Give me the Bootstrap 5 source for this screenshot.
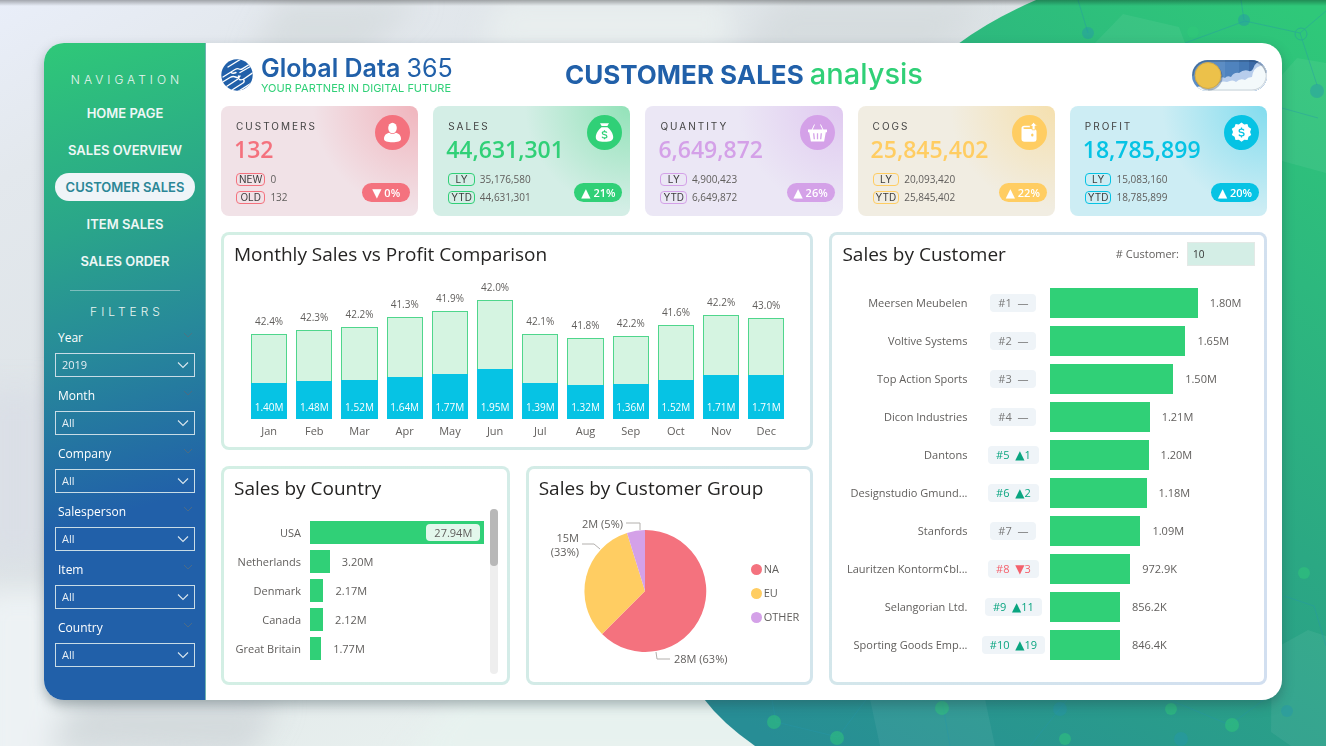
<!DOCTYPE html>
<html lang="en">
<head>
<meta charset="utf-8">
<meta name="viewport" content="width=device-width, initial-scale=1">
<title>Customer Sales Analysis</title>
<link href="https://cdn.jsdelivr.net/npm/bootstrap@5.3.0/dist/css/bootstrap.min.css" rel="stylesheet">
<style>
:root{--green:#30d077;--blue:#2160a9;--cyan:#06c3e4;--ink:#605e5c}
body{font-family:"Open Sans","Noto Sans",sans-serif;font-size:11px;line-height:16px;color:var(--ink);background:#e4e8ec;min-height:100vh}
.geo{font-family:Inter,"Open Sans",sans-serif}
.backdrop{position:fixed;inset:0;width:100%;height:100%;z-index:-1}
.stage{min-height:100vh;padding:43px 44px 46px}
.board{border-radius:20px;background:#fff;box-shadow:0 5px 12px rgba(40,60,70,.35);overflow:hidden}
.side{width:162px;flex:none;padding:27px 10px 16px 11px;background:linear-gradient(163deg,#2fc878 0%,#2aa58a 28%,#27899a 46%,#2160a9 70%);border-right:1px solid #6fb3b0}
.side-title{font-size:12px;line-height:20px;font-weight:300;letter-spacing:4px;color:#e9f5f1;text-align:center;margin:0;padding-left:4px}
.side .nav{gap:9px;margin-top:9px}
.side .nav-link{font-size:13px;line-height:28px;padding:0;text-align:center;font-weight:600;color:#eef7f6;border-radius:14px;white-space:nowrap}
.side .nav-link.active{background:#eff4f8;color:#2b8696}
.side hr{margin:15px 15px 11px;color:#cfe3e8;opacity:.5}
.slicers{gap:10px;margin-top:7px;font-family:"Open Sans",sans-serif}
.slicer-head{padding:0 3px;margin-bottom:6px}
.slicers label{font-size:12px;line-height:18px;color:#fff}
.slicers .form-select{height:24px;padding:0 24px 0 6px;font-size:11px;line-height:16px;color:#e6eef4;border:1px solid #c8dce6;border-radius:0;background-color:transparent;background-image:url("data:image/svg+xml,%3Csvg xmlns='http://www.w3.org/2000/svg' viewBox='0 0 12 8'%3E%3Cpath d='M1 1.5l5 5 5-5' fill='none' stroke='%23dbe7ee' stroke-width='1.1'/%3E%3C/svg%3E");background-size:12px 8px;background-position:right 5px center}
.slicers option{color:#333}
.content{padding:12px 15px 15px;min-width:0}
.top-row{display:grid;grid-template-columns:1fr auto 1fr;min-height:40px}
.brand-name{font-size:25px;line-height:26px;font-weight:600;color:var(--blue)}
.brand-name span{font-weight:400}
.brand-tag{font-size:11px;line-height:14px;color:var(--green)}
.page-title{font-size:26px;line-height:36px;font-weight:700;color:var(--blue)}
.page-title span{font-size:29px;line-height:1;font-weight:500;color:var(--green)}
.kpis{gap:15px;margin-top:11px}
.kpi{flex:1 1 0;min-width:0;border-radius:8px;padding:9px 8px 12px 15px;min-height:110px;background:radial-gradient(circle at 100% 0,var(--glow),var(--tint) 105px)}
.k-red{--c:#f4727e;--tint:#f1e2e7;--glow:#f0b5bd}
.k-green{--c:#30d077;--tint:#d4eee6;--glow:#92e2b8}
.k-purple{--c:#d4a1e8;--tint:#ebe7f5;--glow:#e0c9f0}
.k-gold{--c:#ffcd62;--tint:#f1ede2;--glow:#f5e0ae}
.k-cyan{--c:#06c3e4;--tint:#cdedf4;--glow:#82dcee}
.kpi h2{font-size:10px;line-height:14px;letter-spacing:2px;font-weight:400;color:#444;margin:4px 0}
.kpi-value{font-size:23px;line-height:24px;font-weight:600;color:var(--c);margin-left:-2px}
.kpi dl{display:grid;grid-template-columns:auto 1fr;gap:5px;margin:12px 0 0;align-items:center}
.kpi dt{font-weight:400;font-size:10px;line-height:11px;text-align:center;border:1px solid var(--c);border-radius:4px;color:#3c3c3c;padding:0 2px}
.kpi dd{margin:0;line-height:13px;font-size:10px}
.kpi-pill{background:var(--c);color:#fff;font-size:11px;font-weight:600;line-height:19px;border-radius:10px;width:48px;text-align:center;margin-bottom:2px;white-space:nowrap}
.tri{font-family:"DejaVu Sans",sans-serif;font-size:12px;font-weight:400;line-height:1}
.panels{display:grid;grid-template-columns:289fr 288fr 438fr;grid-template-rows:218fr 219fr;gap:16px;margin-top:16px}
.panel{border:3px solid transparent;border-radius:8px;background:linear-gradient(#fff,#fff) padding-box,linear-gradient(100deg,var(--a),var(--b)) border-box;padding:7px 9px 7px 10px;min-width:0}
.panel h2{font-size:19px;line-height:24px;font-weight:400;color:#252423;margin:0}
.months{height:158px;margin:15px 17px 0;gap:9px}
.month{flex:1 1 0;min-width:0;text-align:center}
.pct{font-size:10px;line-height:18px;margin:0 -6px 4px}
.col-sales{width:100%;background:#d5f4e1;border:1px solid #4fd68c}
.col-profit{background:var(--cyan);color:#fff;font-size:10px;line-height:12px;margin:0 -1px -1px;padding-bottom:6px}
.month-name{line-height:16px;margin-top:4px}
.h-row{gap:9px}
.fill{background:var(--green);flex:none}
.nation .h-row{height:23px;margin-bottom:6px}
.nation .who{width:67px;text-align:right;white-space:nowrap}
.nation .fill{height:23px}
.nation-body{margin-top:9px}
.chip{background:#e3f7ec;border-radius:4px;line-height:17px;padding:0 8px}
.rail{width:8px;border-radius:4px;background:#eee}
.rail div{width:8px;height:57px;border-radius:4px;background:#b8b8b8}
.group-body{margin-top:2px}
.key{padding-top:12px;gap:8px}
.key li{gap:2px}
.dot{width:11px;height:11px;border-radius:50%}
.cust-head{margin-bottom:22px}
.cust .h-row{height:30px;margin-bottom:8px}
.cust .who{width:125px;text-align:right;white-space:nowrap}
.cust .fill{height:30px}
.rank-cell{width:74px;flex:none}
.rank{background:#eff4f8;border-radius:4px;line-height:18px;padding:0 8px;color:#777;white-space:pre}
.rank.up{color:#0aa580}.rank.down{color:#f4616c}
.count-box{width:68px;height:24px;border:1px solid #e3e9e6;border-radius:0;background:#d4eee6;font-size:10px;color:#333;padding:0 5px}
</style>
</head>
<body>
<svg class="backdrop" viewBox="0 0 1326 746" preserveAspectRatio="none" aria-hidden="true">
<defs>
<linearGradient id="base" x1="0" y1="0" x2="1" y2="1"><stop offset="0" stop-color="#e9eef9"/><stop offset=".12" stop-color="#e3e8ed"/><stop offset=".4" stop-color="#dce2e5"/><stop offset=".7" stop-color="#eaf2f0"/></linearGradient>
<linearGradient id="sweep" gradientUnits="userSpaceOnUse" x1="1290" y1="0" x2="780" y2="746"><stop offset="0" stop-color="#2fc879"/><stop offset=".5" stop-color="#2ba883"/><stop offset="1" stop-color="#278d95"/></linearGradient>
<linearGradient id="shade" x1="0" y1="0" x2="0" y2="1"><stop offset="0" stop-color="#000" stop-opacity=".3"/><stop offset="1" stop-color="#000" stop-opacity="0"/></linearGradient>
<filter id="soft" x="-20%" y="-20%" width="140%" height="140%"><feGaussianBlur stdDeviation="14"/></filter>
</defs>
<rect width="1326" height="746" fill="url(#base)"/>
<g filter="url(#soft)"><path d="M280 0h140l-60 60H250zM780 0h200l-40 60H740z" fill="#d3d9dc" opacity=".7"/><path d="M500 0h230v50H480z" fill="#e8eeee"/>
<path d="M-20 390H50V560H-20z" fill="#dadfe6"/><path d="M-20 590H60V780H-20z" fill="#edf2f4"/><path d="M40 746L90 700h190l-30 56z" fill="#cfd6d9" opacity=".8"/><path d="M400 770l60-80h300l40 80z" fill="#e7f2ef"/></g>
<path d="M1036 0Q990 20 958 44C700 250 590 520 704 699Q722 723 755 746H1326V0z" fill="url(#sweep)"/>
<g fill="#fff" opacity=".06"><path d="M1095 43l28-29 56 13 6 16zM1282 75l15-17 29 5v110l-44-12zM870 699h115l10 47H880zM1272 650l36-20 18 6v110h-35l-20-14z"/></g>
<g fill="none" stroke="#2697ab" stroke-opacity=".4"><path d="M1078 0l10 33M1185 43l60-22 55 12 17 52M1241 0l3 20M1300 33l26-22M1282 108l36 10M772 700l4 22 62 15 30-40M942 700l8 46M1170 700l60 25 40-30M1030 746l40-50M1284 596l30 10 12 40"/></g>
<circle cx="1301" cy="34" r="6" fill="none" stroke="#2bb08f"/>
<g fill="#2697ab" fill-opacity=".45"><circle cx="1088" cy="33" r="6"/><circle cx="1244" cy="20" r="6"/><circle cx="1317" cy="91" r="7"/><circle cx="1060" cy="709" r="7"/><circle cx="1287" cy="711" r="6"/><circle cx="1181" cy="739" r="7"/></g>
<g fill="#30c97a" fill-opacity=".5"><circle cx="774" cy="722" r="7"/><circle cx="837" cy="738" r="7"/><circle cx="942" cy="708" r="7"/><circle cx="1171" cy="709" r="6"/><circle cx="1232" cy="725" r="7"/><circle cx="1065" cy="739" r="6"/><circle cx="1304" cy="573" r="6"/><circle cx="1193" cy="32" r="6"/></g>
<rect width="1326" height="6" fill="url(#shade)"/>
</svg>

<div class="stage d-flex">
<div class="board d-flex flex-grow-1">
<aside class="side geo">
  <p class="side-title">NAVIGATION</p>
  <nav class="nav flex-column" aria-label="Reports">
    <a class="nav-link" href="#">HOME PAGE</a>
    <a class="nav-link" href="#">SALES OVERVIEW</a>
    <a class="nav-link active" href="#" aria-current="page">CUSTOMER SALES</a>
    <a class="nav-link" href="#">ITEM SALES</a>
    <a class="nav-link" href="#">SALES ORDER</a>
  </nav>
  <hr>
  <p class="side-title">FILTERS</p>
  <form class="slicers d-flex flex-column">
    <div><div class="slicer-head d-flex justify-content-between"><label for="f1">Year</label><svg width="8" height="14" viewBox="0 0 8 14" fill="none" stroke="#4b7583" aria-hidden="true"><path d="M0 4l4 4 4-4"/></svg></div><select class="form-select" id="f1"><option>2019</option></select></div>
    <div><div class="slicer-head d-flex justify-content-between"><label for="f2">Month</label><svg width="8" height="14" viewBox="0 0 8 14" fill="none" stroke="#4b6b83" aria-hidden="true"><path d="M0 4l4 4 4-4"/></svg></div><select class="form-select" id="f2"><option>All</option></select></div>
    <div><div class="slicer-head d-flex justify-content-between"><label for="f3">Company</label><svg width="8" height="14" viewBox="0 0 8 14" fill="none" stroke="#4b6b83" aria-hidden="true"><path d="M0 4l4 4 4-4"/></svg></div><select class="form-select" id="f3"><option>All</option></select></div>
    <div><div class="slicer-head d-flex justify-content-between"><label for="f4">Salesperson</label><svg width="8" height="14" viewBox="0 0 8 14" fill="none" stroke="#4b6b88" aria-hidden="true"><path d="M0 4l4 4 4-4"/></svg></div><select class="form-select" id="f4"><option>All</option></select></div>
    <div><div class="slicer-head d-flex justify-content-between"><label for="f5">Item</label><svg width="8" height="14" viewBox="0 0 8 14" fill="none" stroke="#4b6b88" aria-hidden="true"><path d="M0 4l4 4 4-4"/></svg></div><select class="form-select" id="f5"><option>All</option></select></div>
    <div><div class="slicer-head d-flex justify-content-between"><label for="f6">Country</label><svg width="8" height="14" viewBox="0 0 8 14" fill="none" stroke="#4b6b88" aria-hidden="true"><path d="M0 4l4 4 4-4"/></svg></div><select class="form-select" id="f6"><option>All</option></select></div>
  </form>
</aside>

<main class="content flex-grow-1 d-flex flex-column">
  <header class="top-row align-items-center">
    <div class="d-flex align-items-center gap-2 geo">
      <svg width="32" height="32" viewBox="0 0 32 32" aria-hidden="true"><defs><clipPath id="globe"><circle cx="16" cy="16" r="15.7"/></clipPath></defs><circle cx="16" cy="16" r="15.7" fill="#2160a9"/><g clip-path="url(#globe)" fill="none" stroke="#fff" stroke-width="1.4" stroke-linecap="round" stroke-linejoin="round"><path d="M7 8L20 0M2 18L14 10.500q2.500-1.500 4-.5t4-.7L29 5M0 24l9-5.500q3-1.700 5.500-.5t4.500-1M10 13.500q2 1.500 5 0M4 28.500L17 20q2-1.500.5-3M19 13.500L32 6M18.500 20.500q2 1 5-1L33 13M11 31l11-7q2-1.500.5-3.500M17 32.500L33 22.500"/></g></svg>
      <div><div class="brand-name">Global Data <span>365</span></div><div class="brand-tag">YOUR PARTNER IN DIGITAL FUTURE</div></div>
    </div>
    <h1 class="page-title geo m-0">CUSTOMER SALES <span>analysis</span></h1>
    <label class="ms-auto d-block lh-1">
      <input class="visually-hidden" type="checkbox" role="switch" aria-label="Light theme" checked>
      <svg width="75" height="31" viewBox="0 0 75 31" aria-hidden="true"><defs><clipPath id="tg"><rect width="75" height="31" rx="15.500"/></clipPath></defs><g clip-path="url(#tg)"><rect width="75" height="31" fill="#5c8dc4"/><path d="M33 0h14v31H33z" fill="#4f83be"/><path d="M47 0h12v31H47z" fill="#4478b4"/><path d="M57 0h18v31H57z" fill="#3a69a6"/><path d="M26 31V20q3-4 7-2 2-3 6-1 3-5 8-4 5-4 10-2 2 1 4-2 1-8 14-9v31z" fill="#b7cdec"/><path d="M5 31v-4q10-3 20-2 4-5 10-3 6-3 9 0 4-4 9-2 3-3 7-3 1-9 8-11 5-2 7 2v23z" fill="#f3f9fb"/><path d="M1 15.500A14.500 14.500 0 0 1 15.500 1h44A14.500 14.500 0 0 1 74 13" fill="none" stroke="#27415f" stroke-opacity=".4" stroke-width="1.500"/><path d="M74 13A14.500 14.500 0 0 1 60 30H16" fill="none" stroke="#c9d2d8" stroke-width="1"/><circle cx="17" cy="17" r="13.500" fill="#26405e" opacity=".35"/></g><circle cx="16" cy="15.500" r="13" fill="#ecc14a" stroke="#d2ab48"/></svg>
    </label>
  </header>

  <section class="kpis d-flex" aria-label="Key figures">
    <article class="kpi k-red d-flex justify-content-between">
      <div><h2 class="geo">CUSTOMERS</h2><div class="kpi-value">132</div><dl><dt class="geo">NEW</dt><dd>0</dd><dt class="geo">OLD</dt><dd>132</dd></dl></div>
      <div class="d-flex flex-column justify-content-between align-items-end">
        <svg width="35" height="35" viewBox="0 0 35 35" aria-hidden="true"><circle cx="17.500" cy="17.500" r="17.500" fill="#f4727e"/><g fill="#fff"><ellipse cx="17.500" cy="13" rx="4.300" ry="5.200"/><path d="M9 24c0-4 2.500-5.500 5.300-6.200q3.200 2.600 6.400 0C23.500 18.500 26 20 26 24c0 2.500-3.500 3.200-8.500 3.200S9 26.500 9 24z"/></g></svg>
        <span class="kpi-pill"><span class="tri">▼</span> 0%</span></div>
    </article>
    <article class="kpi k-green d-flex justify-content-between">
      <div><h2 class="geo">SALES</h2><div class="kpi-value">44,631,301</div><dl><dt class="geo">LY</dt><dd>35,176,580</dd><dt class="geo">YTD</dt><dd>44,631,301</dd></dl></div>
      <div class="d-flex flex-column justify-content-between align-items-end">
        <svg width="35" height="35" viewBox="0 0 35 35" aria-hidden="true"><circle cx="17.500" cy="17.500" r="17.500" fill="#30d077"/><path fill="#fff" d="M13 8.300h9l-1.600 2.700h-5.800zM14.500 12.200h6c3 2.400 5.700 6.300 5.700 9.800 0 3.600-2.500 4.700-8.700 4.700S8.800 25.600 8.800 22c0-3.500 2.700-7.400 5.700-9.800z"/><path d="M19.900 17.600q-.8-1-2.400-1-2.200 0-2.200 1.500 0 1.300 2.200 1.600 2.400.3 2.400 1.700 0 1.500-2.400 1.500-1.800 0-2.500-1.200M17.500 15.300v1.300m0 6.300v1.400" fill="none" stroke="#30d077" stroke-width="1.200"/></svg>
        <span class="kpi-pill"><span class="tri">▲</span> 21%</span></div>
    </article>
    <article class="kpi k-purple d-flex justify-content-between">
      <div><h2 class="geo">QUANTITY</h2><div class="kpi-value">6,649,872</div><dl><dt class="geo">LY</dt><dd>4,900,423</dd><dt class="geo">YTD</dt><dd>6,649,872</dd></dl></div>
      <div class="d-flex flex-column justify-content-between align-items-end">
        <svg width="35" height="35" viewBox="0 0 35 35" aria-hidden="true"><circle cx="17.500" cy="17.500" r="17.500" fill="#d4a1e8"/><path d="M12 15l2.500-5.500M23 15l-2.500-5.500" stroke="#fff" stroke-width="1"/><path fill="#fff" d="M8 14.500h19v2.700h-1.200l-1.700 9.300H10.900L9.200 17.200H8z"/><path d="M13.700 18.300l.6 6M17.500 18.300v6M21.300 18.300l-.6 6" stroke="#d4a1e8" stroke-width="1.300"/></svg>
        <span class="kpi-pill"><span class="tri">▲</span> 26%</span></div>
    </article>
    <article class="kpi k-gold d-flex justify-content-between">
      <div><h2 class="geo">COGS</h2><div class="kpi-value">25,845,402</div><dl><dt class="geo">LY</dt><dd>20,093,420</dd><dt class="geo">YTD</dt><dd>25,845,402</dd></dl></div>
      <div class="d-flex flex-column justify-content-between align-items-end">
        <svg width="35" height="35" viewBox="0 0 35 35" aria-hidden="true"><circle cx="17.500" cy="17.500" r="17.500" fill="#ffcd62"/><path fill="#fff" d="M12.300 10.800H18v1.500h-5.500q-1.300 0-1.300.8t1.300.8H22q2.500 0 2.500 2.200v8.300q0 2.300-2.500 2.300h-9.500q-3 0-3-2.700V13.500q0-2.700 2.800-2.700z"/><path fill="#fff" stroke="#ffcd62" stroke-width=".8" d="M21.600 7.400l3.800 3.600h-2.300v3.800h-3V11h-2.300z"/><ellipse cx="20.300" cy="20" rx="1.200" ry="1.500" fill="#ffcd62"/></svg>
        <span class="kpi-pill"><span class="tri">▲</span> 22%</span></div>
    </article>
    <article class="kpi k-cyan d-flex justify-content-between">
      <div><h2 class="geo">PROFIT</h2><div class="kpi-value">18,785,899</div><dl><dt class="geo">LY</dt><dd>15,083,160</dd><dt class="geo">YTD</dt><dd>18,785,899</dd></dl></div>
      <div class="d-flex flex-column justify-content-between align-items-end">
        <svg width="35" height="35" viewBox="0 0 35 35" aria-hidden="true"><circle cx="17.500" cy="17.500" r="17.500" fill="#06c3e4"/><path fill="#fff" d="M17.500 7.500l2.700 1.900 3.200-.4 1 3.100 2.800 1.700-1.100 3.100 1.100 3.100-2.700 1.800-.9 3.200-3.300-.2-2.800 2-2.700-2-3.300.2-.9-3.200-2.800-1.800 1.200-3.100-1.200-3.100 2.800-1.700 1-3.100 3.200.4z"/><path d="M20 15.400q-.8-1.200-2.500-1.200-2.300 0-2.300 1.500t2.300 1.700q2.500.3 2.500 1.900 0 1.600-2.500 1.600-1.900 0-2.600-1.300M17.500 12.500v1.600m0 6.900v1.600" fill="none" stroke="#06c3e4" stroke-width="1.300"/></svg>
        <span class="kpi-pill"><span class="tri">▲</span> 20%</span></div>
    </article>
  </section>

  <div class="panels flex-grow-1">
    <section class="panel" style="--a:#d3efe4;--b:#d2e6ea;grid-column:span 2">
      <h2>Monthly Sales vs Profit Comparison</h2>
      <div class="months d-flex align-items-end">
        <div class="month"><div class="pct">42.4%</div><div class="col-sales d-flex flex-column justify-content-end" style="height:85px"><div class="col-profit d-flex align-items-end justify-content-center" style="height:36px">1.40M</div></div><div class="month-name">Jan</div></div>
        <div class="month"><div class="pct">42.3%</div><div class="col-sales d-flex flex-column justify-content-end" style="height:89px"><div class="col-profit d-flex align-items-end justify-content-center" style="height:38px">1.48M</div></div><div class="month-name">Feb</div></div>
        <div class="month"><div class="pct">42.2%</div><div class="col-sales d-flex flex-column justify-content-end" style="height:92px"><div class="col-profit d-flex align-items-end justify-content-center" style="height:39px">1.52M</div></div><div class="month-name">Mar</div></div>
        <div class="month"><div class="pct">41.3%</div><div class="col-sales d-flex flex-column justify-content-end" style="height:102px"><div class="col-profit d-flex align-items-end justify-content-center" style="height:42px">1.64M</div></div><div class="month-name">Apr</div></div>
        <div class="month"><div class="pct">41.9%</div><div class="col-sales d-flex flex-column justify-content-end" style="height:108px"><div class="col-profit d-flex align-items-end justify-content-center" style="height:45px">1.77M</div></div><div class="month-name">May</div></div>
        <div class="month"><div class="pct">42.0%</div><div class="col-sales d-flex flex-column justify-content-end" style="height:119px"><div class="col-profit d-flex align-items-end justify-content-center" style="height:50px">1.95M</div></div><div class="month-name">Jun</div></div>
        <div class="month"><div class="pct">42.1%</div><div class="col-sales d-flex flex-column justify-content-end" style="height:85px"><div class="col-profit d-flex align-items-end justify-content-center" style="height:36px">1.39M</div></div><div class="month-name">Jul</div></div>
        <div class="month"><div class="pct">41.8%</div><div class="col-sales d-flex flex-column justify-content-end" style="height:81px"><div class="col-profit d-flex align-items-end justify-content-center" style="height:34px">1.32M</div></div><div class="month-name">Aug</div></div>
        <div class="month"><div class="pct">42.2%</div><div class="col-sales d-flex flex-column justify-content-end" style="height:83px"><div class="col-profit d-flex align-items-end justify-content-center" style="height:35px">1.36M</div></div><div class="month-name">Sep</div></div>
        <div class="month"><div class="pct">41.6%</div><div class="col-sales d-flex flex-column justify-content-end" style="height:94px"><div class="col-profit d-flex align-items-end justify-content-center" style="height:39px">1.52M</div></div><div class="month-name">Oct</div></div>
        <div class="month"><div class="pct">42.2%</div><div class="col-sales d-flex flex-column justify-content-end" style="height:104px"><div class="col-profit d-flex align-items-end justify-content-center" style="height:44px">1.71M</div></div><div class="month-name">Nov</div></div>
        <div class="month"><div class="pct">43.0%</div><div class="col-sales d-flex flex-column justify-content-end" style="height:101px"><div class="col-profit d-flex align-items-end justify-content-center" style="height:44px">1.71M</div></div><div class="month-name">Dec</div></div>
      </div>
    </section>

    <section class="panel cust" style="--a:#d4e8ea;--b:#d2dff0;grid-row:span 2">
      <div class="cust-head d-flex align-items-center justify-content-between">
        <h2>Sales by Customer</h2>
        <div class="d-flex align-items-center gap-2"><label for="top-n"># Customer:</label><input class="count-box" id="top-n" type="text" value="10"></div>
      </div>
      <div class="h-row d-flex align-items-center"><span class="who">Meersen Meubelen</span><div class="d-flex align-items-center flex-grow-1"><div class="rank-cell d-flex justify-content-center"><span class="rank">#1  —</span></div><div class="d-flex align-items-center flex-grow-1"><div class="fill me-2" style="width:72%"></div><span class="ps-1">1.80M</span></div></div></div>
      <div class="h-row d-flex align-items-center"><span class="who">Voltive Systems</span><div class="d-flex align-items-center flex-grow-1"><div class="rank-cell d-flex justify-content-center"><span class="rank">#2  —</span></div><div class="d-flex align-items-center flex-grow-1"><div class="fill me-2" style="width:66%"></div><span class="ps-1">1.65M</span></div></div></div>
      <div class="h-row d-flex align-items-center"><span class="who">Top Action Sports</span><div class="d-flex align-items-center flex-grow-1"><div class="rank-cell d-flex justify-content-center"><span class="rank">#3  —</span></div><div class="d-flex align-items-center flex-grow-1"><div class="fill me-2" style="width:60%"></div><span class="ps-1">1.50M</span></div></div></div>
      <div class="h-row d-flex align-items-center"><span class="who">Dicon Industries</span><div class="d-flex align-items-center flex-grow-1"><div class="rank-cell d-flex justify-content-center"><span class="rank">#4  —</span></div><div class="d-flex align-items-center flex-grow-1"><div class="fill me-2" style="width:48.500%"></div><span class="ps-1">1.21M</span></div></div></div>
      <div class="h-row d-flex align-items-center"><span class="who">Dantons</span><div class="d-flex align-items-center flex-grow-1"><div class="rank-cell d-flex justify-content-center"><span class="rank up">#5  <span class="tri">▲</span>1</span></div><div class="d-flex align-items-center flex-grow-1"><div class="fill me-2" style="width:48%"></div><span class="ps-1">1.20M</span></div></div></div>
      <div class="h-row d-flex align-items-center"><span class="who">Designstudio Gmund...</span><div class="d-flex align-items-center flex-grow-1"><div class="rank-cell d-flex justify-content-center"><span class="rank up">#6  <span class="tri">▲</span>2</span></div><div class="d-flex align-items-center flex-grow-1"><div class="fill me-2" style="width:47%"></div><span class="ps-1">1.18M</span></div></div></div>
      <div class="h-row d-flex align-items-center"><span class="who">Stanfords</span><div class="d-flex align-items-center flex-grow-1"><div class="rank-cell d-flex justify-content-center"><span class="rank">#7  —</span></div><div class="d-flex align-items-center flex-grow-1"><div class="fill me-2" style="width:44%"></div><span class="ps-1">1.09M</span></div></div></div>
      <div class="h-row d-flex align-items-center"><span class="who">Lauritzen Kontorm¢bl...</span><div class="d-flex align-items-center flex-grow-1"><div class="rank-cell d-flex justify-content-center"><span class="rank down">#8  <span class="tri">▼</span>3</span></div><div class="d-flex align-items-center flex-grow-1"><div class="fill me-2" style="width:39%"></div><span class="ps-1">972.9K</span></div></div></div>
      <div class="h-row d-flex align-items-center"><span class="who">Selangorian Ltd.</span><div class="d-flex align-items-center flex-grow-1"><div class="rank-cell d-flex justify-content-center"><span class="rank up">#9  <span class="tri">▲</span>11</span></div><div class="d-flex align-items-center flex-grow-1"><div class="fill me-2" style="width:34%"></div><span class="ps-1">856.2K</span></div></div></div>
      <div class="h-row d-flex align-items-center"><span class="who">Sporting Goods Emp...</span><div class="d-flex align-items-center flex-grow-1"><div class="rank-cell d-flex justify-content-center"><span class="rank up">#10  <span class="tri">▲</span>19</span></div><div class="d-flex align-items-center flex-grow-1"><div class="fill me-2" style="width:34%"></div><span class="ps-1">846.4K</span></div></div></div>
    </section>

    <section class="panel nation" style="--a:#d3efe4;--b:#d4ece8">
      <h2>Sales by Country</h2>
      <div class="nation-body d-flex">
        <div class="flex-grow-1 pt-2 mt-1 pb-2">
          <div class="h-row d-flex align-items-center"><span class="who">USA</span><div class="d-flex align-items-center flex-grow-1"><div class="fill d-flex align-items-center justify-content-end pe-1" style="width:97%"><span class="chip">27.94M</span></div></div></div>
          <div class="h-row d-flex align-items-center"><span class="who">Netherlands</span><div class="d-flex align-items-center flex-grow-1"><div class="fill me-2" style="width:11%"></div><span class="ps-1">3.20M</span></div></div>
          <div class="h-row d-flex align-items-center"><span class="who">Denmark</span><div class="d-flex align-items-center flex-grow-1"><div class="fill me-2" style="width:7.500%"></div><span class="ps-1">2.17M</span></div></div>
          <div class="h-row d-flex align-items-center"><span class="who">Canada</span><div class="d-flex align-items-center flex-grow-1"><div class="fill me-2" style="width:7.300%"></div><span class="ps-1">2.12M</span></div></div>
          <div class="h-row d-flex align-items-center"><span class="who">Great Britain</span><div class="d-flex align-items-center flex-grow-1"><div class="fill me-2" style="width:6.200%"></div><span class="ps-1">1.77M</span></div></div>
        </div>
        <div class="rail" aria-hidden="true"><div></div></div>
      </div>
    </section>

    <section class="panel" style="--a:#d3ece6;--b:#d3e5ec">
      <h2>Sales by Customer Group</h2>
      <div class="group-body d-flex align-items-center">
        <svg width="212" height="170" viewBox="539 502 212 170" role="img" aria-label="Share of sales by customer group">
          <path d="M645 591V530A61 61 0 1 1 602 634z" fill="#f4727e"/>
          <path d="M645 591L602 634A61 61 0 0 1 627 533z" fill="#ffcd62"/>
          <path d="M645 591L627 533A61 61 0 0 1 645 530z" fill="#d4a1e8"/>
          <path d="M626 523h14v7M582 544h12l6 5M656 652l1 7h13" fill="none" stroke="#b3b0ad"/>
          <g fill="#605e5c" font-size="11"><text x="623" y="528" text-anchor="end">2M (5%)</text><text x="579" y="542" text-anchor="end">15M</text><text x="579" y="556" text-anchor="end">(33%)</text><text x="674" y="663">28M (63%)</text></g>
        </svg>
        <ul class="key list-unstyled m-0 d-flex flex-column">
          <li class="d-flex align-items-center"><span class="dot" style="background:#f4727e"></span>NA</li>
          <li class="d-flex align-items-center"><span class="dot" style="background:#ffcd62"></span>EU</li>
          <li class="d-flex align-items-center"><span class="dot" style="background:#d4a1e8"></span>OTHER</li>
        </ul>
      </div>
    </section>
  </div>
</main>
</div>
</div>
<script src="https://cdn.jsdelivr.net/npm/bootstrap@5.3.0/dist/js/bootstrap.bundle.min.js"></script>
</body>
</html>
